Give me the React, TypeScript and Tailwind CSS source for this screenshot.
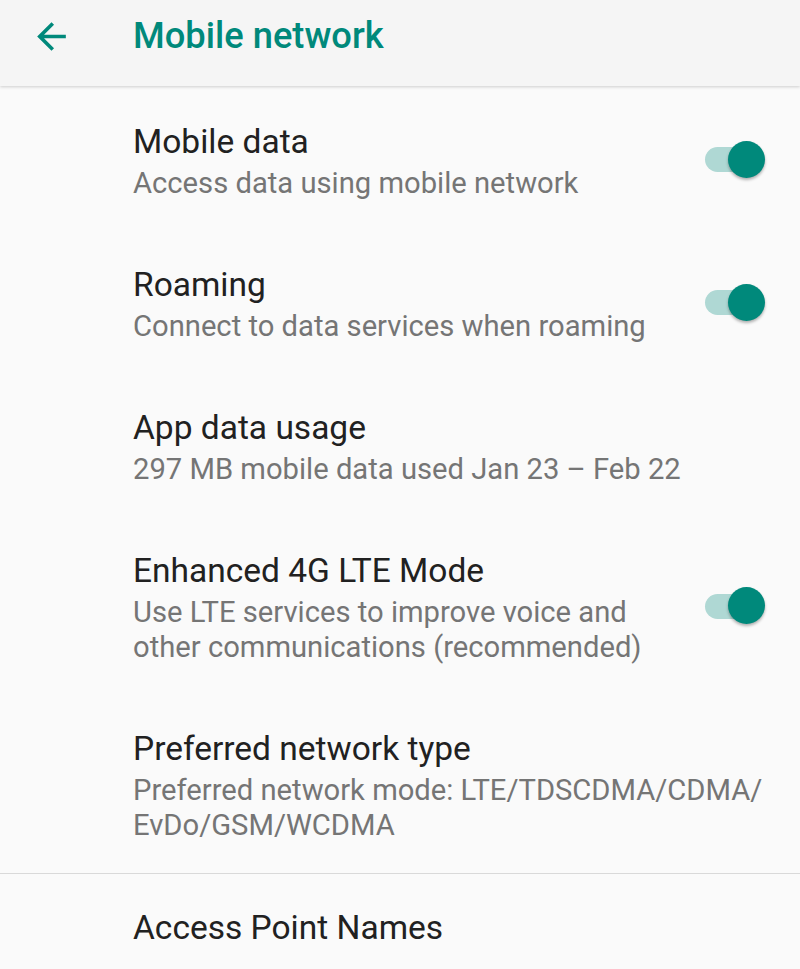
const ROBOTO = { fontFamily: 'Roboto, "Noto Sans", sans-serif' };

type Row = {
  title: string;
  lines: string[];
  toggle?: boolean;
};

const rows: Row[] = [
  { title: 'Mobile data', lines: ['Access data using mobile network'], toggle: true },
  { title: 'Roaming', lines: ['Connect to data services when roaming'], toggle: true },
  { title: 'App data usage', lines: ['297 MB mobile data used Jan 23 – Feb 22'] },
  {
    title: 'Enhanced 4G LTE Mode',
    lines: ['Use LTE services to improve voice and', 'other communications (recommended)'],
    toggle: true,
  },
  {
    title: 'Preferred network type',
    lines: ['Preferred network mode: LTE/TDSCDMA/CDMA/', 'EvDo/GSM/WCDMA'],
  },
];

function Toggle() {
  return (
    <div className="relative w-[60px] h-[38px] flex items-center">
      <div className="w-[59px] h-[25px] rounded-full bg-[#afd8d4]" />
      <div className="absolute right-0 top-0 w-[37px] h-[37px] rounded-full bg-[#00897b] shadow-[0_2px_3px_rgba(0,0,0,0.3)]" />
    </div>
  );
}

function SettingRow({ row }: { row: Row }) {
  return (
    <div className="flex items-center pl-[133px] pr-[35px] py-[30px]">
      <div className="flex-1 min-w-0">
        <div className="text-[33.5px] leading-[48px] text-[#212121] whitespace-nowrap">{row.title}</div>
        {row.lines.map((l) => (
          <div key={l} className="text-[29.2px] leading-[35px] text-[#757575] whitespace-nowrap">
            {l}
          </div>
        ))}
      </div>
      {row.toggle && <Toggle />}
    </div>
  );
}

export default function App() {
  return (
    <div className="w-[800px] h-[969px] bg-[#fafafa] overflow-hidden" style={ROBOTO}>
      <div className="relative z-10 h-[86px] bg-[#f5f5f5] flex items-center pb-[14px] shadow-[0_1px_3px_rgba(0,0,0,0.18)]">
        <div className="w-[133px] pl-[30px]">
          <svg width="43" height="43" viewBox="0 0 24 24" fill="#00897b">
            <path d="M20 11H7.83l5.59-5.59L12 4l-8 8 8 8 1.41-1.41L7.83 13H20v-2z" />
          </svg>
        </div>
        <div className="text-[36.3px] font-medium text-[#00897b] leading-none">Mobile network</div>
      </div>

      <div className="pt-[2px]">
        {rows.map((r) => (
          <SettingRow key={r.title} row={r} />
        ))}

        <div className="h-px bg-[#d9d9d9]" />

        <div className="pl-[133px] py-[30px]">
          <div className="text-[33.5px] leading-[48px] text-[#212121]">Access Point Names</div>
        </div>
      </div>
    </div>
  );
}
